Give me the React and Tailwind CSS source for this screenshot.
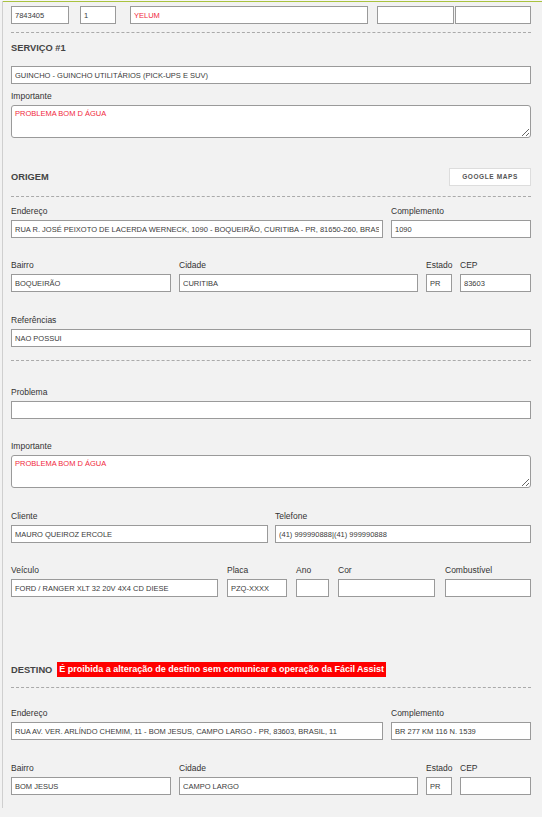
import React from 'react';

const font = { fontFamily: '"Liberation Sans", Arial, sans-serif' };

function Label({ children, className = '' }) {
    return (
        <div className={'h-[12px] leading-[12px] text-[8.5px] text-[#333] mb-[3px] whitespace-nowrap ' + className}>
            {children}
        </div>
    );
}

function Field({ label, value = '', w, red, className = '' }) {
    return (
        <div className={'shrink-0 ' + className} style={{ width: w }}>
            <Label>{label}</Label>
            <input
                readOnly
                value={value}
                className={
                    'block w-full h-[18px] bg-white border border-[#9a9a9a] px-[3px] text-[7.5px] outline-none ' +
                    (red ? 'text-[#f0283c]' : 'text-[#3a3a3a]')
                }
            />
        </div>
    );
}

function Area({ label, value, className = '' }) {
    return (
        <div className={className}>
            <Label>{label}</Label>
            <textarea
                readOnly
                value={value}
                className="block w-full h-[33px] bg-white border border-[#9a9a9a] rounded-[3px] px-[3px] py-[2px] text-[7.5px] text-[#f0283c] outline-none"
            />
        </div>
    );
}

function Dashed({ className = '' }) {
    return <div className={'border-t border-dashed border-[#aaa] ' + className} />;
}

function Heading({ children }) {
    return <div className="text-[9.3px] font-bold text-[#444] leading-[12px] whitespace-nowrap">{children}</div>;
}

export default function App() {
    return (
        <div className="relative w-[542px] h-[817px] overflow-hidden bg-[#f2f2f2]" style={font}>
            {/* header edge line */}
            <div className="absolute top-0 left-0 right-0 h-[1px] bg-[#f7f7f7] z-10" />
            <div className="absolute top-[1px] left-[3px] right-0 h-[1px] bg-[#a9c23f] z-10" />

            <div className="ml-[2px] border-l border-[#cfcfcf] h-[817px] pl-[8px] pr-[11px]">
                <div className="-mt-[9px]">
                    {/* top row */}
                    <div className="flex">
                        <Field label="Assistência" value="7843405" w={58} />
                        <Field label="Sequência" value="1" w={36} className="ml-[11px]" />
                        <Field label="Produto" value="YELUM" w={238} red className="ml-[14px]" />
                        <Field label="Data agendada" w={77} className="ml-[9px]" />
                        <Field label={'\u00a0'} w={76} className="ml-[1px]" />
                    </div>

                    <Dashed className="mt-[8px]" />

                    {/* serviço */}
                    <div className="mt-[9px]">
                        <Heading>SERVIÇO #1</Heading>
                    </div>
                    <input
                        readOnly
                        value="GUINCHO - GUINCHO UTILITÁRIOS (PICK-UPS E SUV)"
                        className="block w-full mt-[12px] h-[18px] bg-white border border-[#9a9a9a] px-[3px] text-[7.5px] text-[#3a3a3a] outline-none"
                    />
                    <Area label="Importante" value="PROBLEMA BOM D ÁGUA" className="mt-[6px]" />

                    {/* origem */}
                    <div className="mt-[30px] h-[18px] flex items-center justify-between">
                        <Heading>ORIGEM</Heading>
                        <button className="h-[18px] w-[82px] bg-white border border-[#ddd] text-[6.5px] font-bold tracking-[0.6px] text-[#555]">
                            GOOGLE MAPS
                        </button>
                    </div>
                    <Dashed className="mt-[10px]" />

                    <div className="flex mt-[8px]">
                        <Field label="Endereço" value="RUA R. JOSÉ PEIXOTO DE LACERDA WERNECK, 1090 - BOQUEIRÃO, CURITIBA - PR, 81650-260, BRASIL" w={372} />
                        <Field label="Complemento" value="1090" w={140} className="ml-[8px]" />
                    </div>
                    <div className="flex mt-[21px]">
                        <Field label="Bairro" value="BOQUEIRÃO" w={160} />
                        <Field label="Cidade" value="CURITIBA" w={239} className="ml-[8px]" />
                        <Field label="Estado" value="PR" w={26} className="ml-[8px]" />
                        <Field label="CEP" value="83603" w={71} className="ml-[8px]" />
                    </div>
                    <div className="mt-[22px]">
                        <Field label="Referências" value="NAO POSSUI" w={520} />
                    </div>

                    <Dashed className="mt-[13px]" />

                    <div className="mt-[25px]">
                        <Field label="Problema" w={520} />
                    </div>
                    <Area label="Importante" value="PROBLEMA BOM D ÁGUA" className="mt-[21px]" />

                    <div className="flex mt-[22px]">
                        <Field label="Cliente" value="MAURO QUEIROZ ERCOLE" w={257} />
                        <Field label="Telefone" value="(41) 999990888|(41) 999990888" w={256} className="ml-[7px]" />
                    </div>
                    <div className="flex mt-[21px]">
                        <Field label="Veículo" value="FORD / RANGER XLT 32 20V 4X4 CD DIESE" w={207} />
                        <Field label="Placa" value="PZQ-XXXX" w={60} className="ml-[9px]" />
                        <Field label="Ano" w={33} className="ml-[9px]" />
                        <Field label="Cor" w={97} className="ml-[9px]" />
                        <Field label="Combustível" w={86} className="ml-[10px]" />
                    </div>

                    {/* destino */}
                    <div className="mt-[65px] h-[15px] flex items-center">
                        <Heading>DESTINO</Heading>
                        <span className="ml-[5px] h-[15px] leading-[15px] px-[2px] bg-[#ff0000] text-white font-bold text-[9px] whitespace-nowrap">
                            É proibida a alteração de destino sem comunicar a operação da Fácil Assist
                        </span>
                    </div>
                    <Dashed className="mt-[10px]" />

                    <div className="flex mt-[19px]">
                        <Field label="Endereço" value="RUA AV. VER. ARLÍNDO CHEMIM, 11 - BOM JESUS, CAMPO LARGO - PR, 83603, BRASIL, 11" w={372} />
                        <Field label="Complemento" value="BR 277 KM 116 N. 1539" w={140} className="ml-[8px]" />
                    </div>
                    <div className="flex mt-[22px]">
                        <Field label="Bairro" value="BOM JESUS" w={160} />
                        <Field label="Cidade" value="CAMPO LARGO" w={239} className="ml-[8px]" />
                        <Field label="Estado" value="PR" w={26} className="ml-[8px]" />
                        <Field label="CEP" w={71} className="ml-[8px]" />
                    </div>
                </div>
            </div>
        </div>
    );
}
